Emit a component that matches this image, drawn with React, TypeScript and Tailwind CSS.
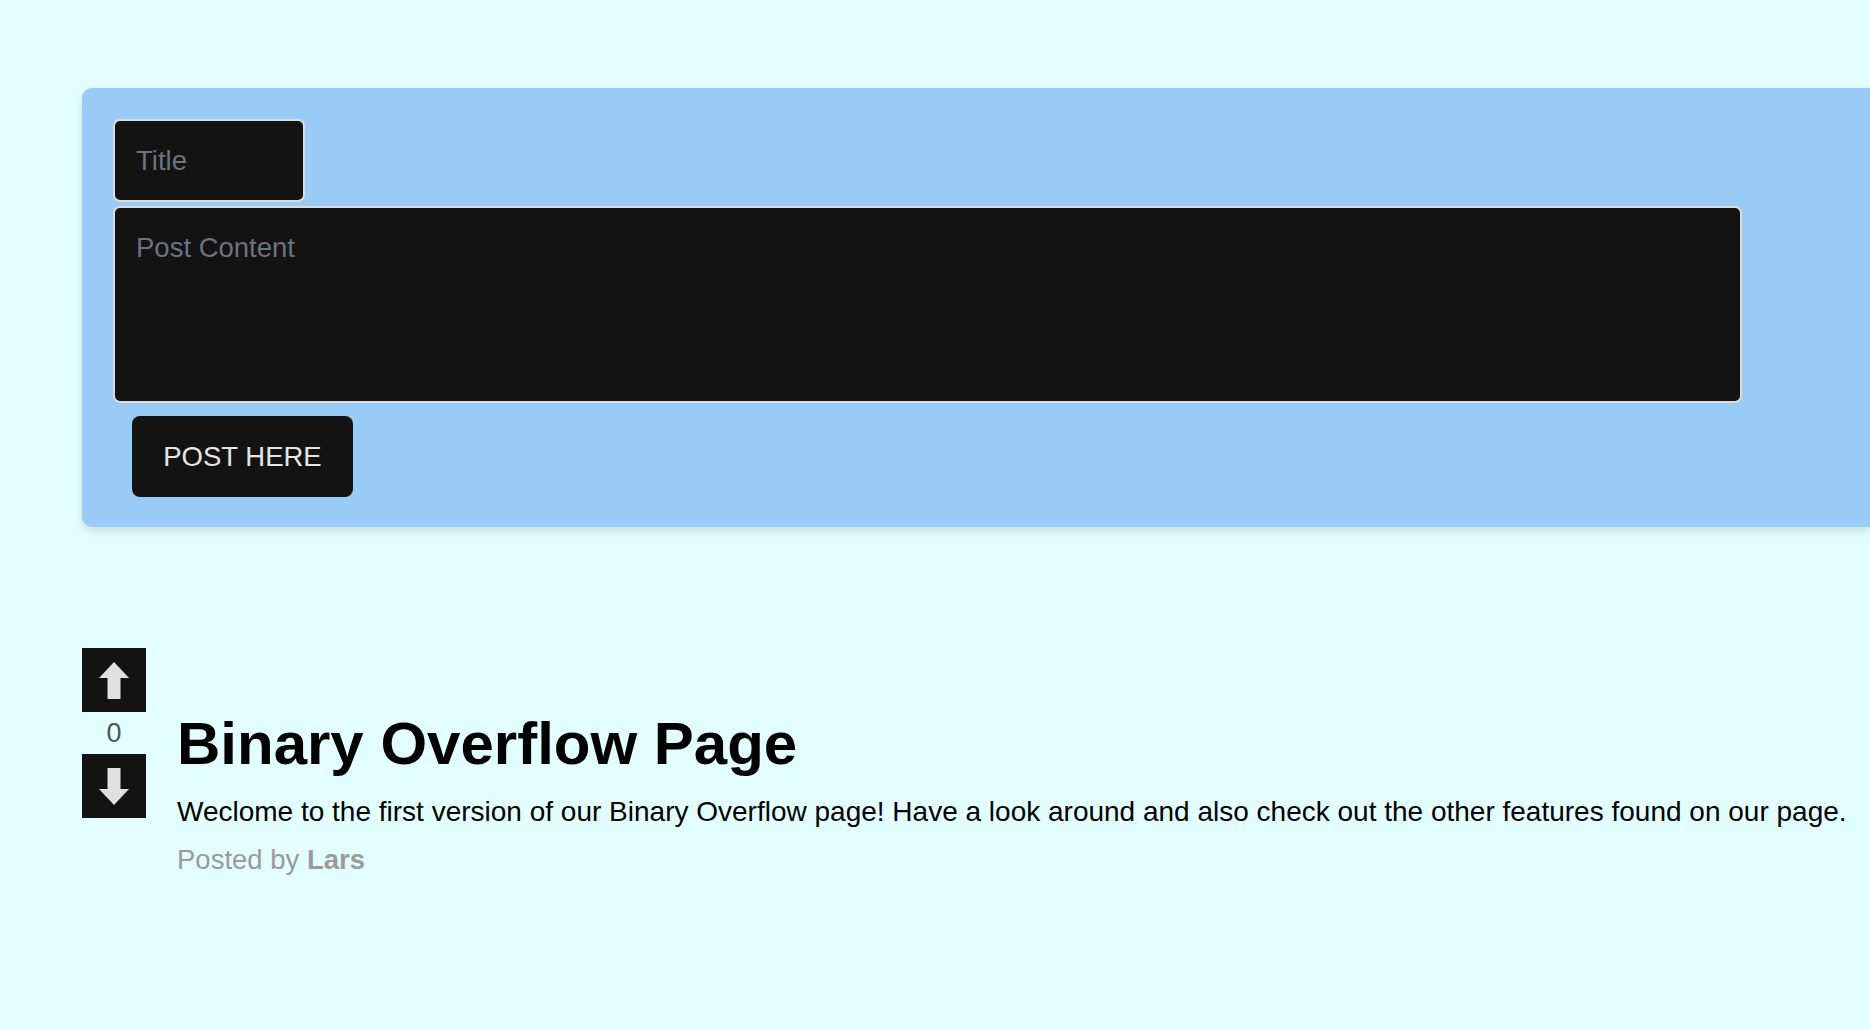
import { useState } from "react";

function ArrowUp() {
  return (
    <svg width="30" height="37" viewBox="0 0 30 37" className="block">
      <path d="M15 0 L30 16 L21.5 16 L21.5 37 L8.5 37 L8.5 16 L0 16 Z" fill="#e0e0e0" />
    </svg>
  );
}

function ArrowDown() {
  return (
    <svg width="30" height="37" viewBox="0 0 30 37" className="block">
      <path d="M15 37 L30 21 L21.5 21 L21.5 0 L8.5 0 L8.5 21 L0 21 Z" fill="#e0e0e0" />
    </svg>
  );
}

export default function App() {
  const [title, setTitle] = useState("");
  const [content, setContent] = useState("");
  const [votes, setVotes] = useState(0);

  return (
    <div className="min-h-screen bg-[#e3feff] pt-[88px] font-['Liberation_Sans',Arial,sans-serif] overflow-hidden">
      {/* New post form */}
      <div className="ml-[82px] bg-[#98cbf5] rounded-l-[10px] shadow-[0_4px_8px_rgba(0,0,0,0.12)] px-[31px] pt-[31px] pb-[30px] flex flex-col items-start">
        <input
          value={title}
          onChange={(e) => setTitle(e.target.value)}
          placeholder="Title"
          className="w-[192px] h-[83px] bg-[#131313] border-2 border-[#dcdcdc] rounded-[7px] px-[21px] text-[27.5px] text-[#e5e5e5] placeholder:text-[#6b7280] outline-none"
        />
        <textarea
          value={content}
          onChange={(e) => setContent(e.target.value)}
          placeholder="Post Content"
          className="mt-[4px] w-[1629px] h-[197px] bg-[#131313] border-2 border-[#dcdcdc] rounded-[7px] px-[21px] pt-[24px] text-[27.5px] leading-[32px] text-[#e5e5e5] placeholder:text-[#6b7280] outline-none resize-none"
        />
        <button className="mt-[13px] ml-[19px] w-[221px] h-[81px] bg-[#131313] rounded-[8px] text-[27.5px] text-[#e5e5e5]">
          POST HERE
        </button>
      </div>

      {/* Post list */}
      <div className="mt-[121px] ml-[82px] flex items-start gap-[31px]">
        <div className="w-[64px] flex flex-col items-center">
          <button
            onClick={() => setVotes(votes + 1)}
            className="w-[64px] h-[64px] bg-[#131313] flex items-center justify-center"
          >
            <ArrowUp />
          </button>
          <div className="h-[42px] flex items-center justify-center text-[27px] text-[#555555]">{votes}</div>
          <button
            onClick={() => setVotes(votes - 1)}
            className="w-[64px] h-[64px] bg-[#131313] flex items-center justify-center"
          >
            <ArrowDown />
          </button>
        </div>
        <div className="mt-[61px]">
          <h1 className="text-[60px] leading-[69px] font-bold text-black">Binary Overflow Page</h1>
          <p className="mt-[19px] text-[28px] leading-[30px] text-black">
            Weclome to the first version of our Binary Overflow page! Have a look around and also check out the other features found on our page.
          </p>
          <p className="mt-[18px] text-[27.5px] leading-[30px] text-[#9a9a9a]">
            Posted by <span className="font-bold">Lars</span>
          </p>
        </div>
      </div>
    </div>
  );
}
